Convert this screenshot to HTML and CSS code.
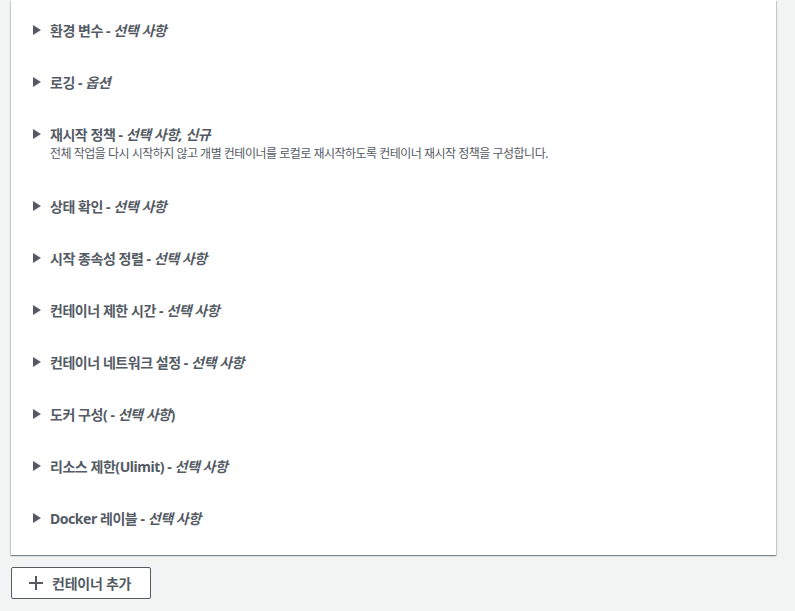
FILE: index.html
```html
<!DOCTYPE html>
<html lang="ko">
<head>
<meta charset="utf-8">
<link rel="stylesheet" href="styles.css">
</head>
<body>
<div class="page">
  <div class="panel">
    <div class="row"><div class="title"><span class="caret"></span><span>환경 변수 - <i>선택 사항</i></span></div></div>
    <div class="row"><div class="title"><span class="caret"></span><span>로깅 - <i>옵션</i></span></div></div>
    <div class="row"><div class="title"><span class="caret"></span><span>재시작 정책 - <i>선택 사항, 신규</i></span></div>
      <div class="desc">전체 작업을 다시 시작하지 않고 개별 컨테이너를 로컬로 재시작하도록 컨테이너 재시작 정책을 구성합니다.</div></div>
    <div class="row"><div class="title"><span class="caret"></span><span>상태 확인 - <i>선택 사항</i></span></div></div>
    <div class="row"><div class="title"><span class="caret"></span><span>시작 종속성 정렬 - <i>선택 사항</i></span></div></div>
    <div class="row"><div class="title"><span class="caret"></span><span>컨테이너 제한 시간 - <i>선택 사항</i></span></div></div>
    <div class="row"><div class="title"><span class="caret"></span><span>컨테이너 네트워크 설정 - <i>선택 사항</i></span></div></div>
    <div class="row"><div class="title"><span class="caret"></span><span>도커 구성( - <i>선택 사항</i>)</span></div></div>
    <div class="row"><div class="title"><span class="caret"></span><span>리소스 제한(Ulimit) - <i>선택 사항</i></span></div></div>
    <div class="row"><div class="title"><span class="caret"></span><span>Docker 레이블 - <i>선택 사항</i></span></div></div>
  </div>
  <button class="add-btn" type="button">
    <svg class="plus" width="16" height="16" viewBox="0 0 16 16"><path d="M8 1v14M1 8h14" stroke="#545b64" stroke-width="2" fill="none"/></svg>
    <span>컨테이너 추가</span>
  </button>
</div>
</body>
</html>
```
FILE: styles.css
```css
html, body {
  margin: 0;
  padding: 0;
  background: #f2f3f3;
}
body {
  font-family: "Noto Sans", "Noto Sans CJK KR", sans-serif;
  color: #545b64;
}
.page {
  padding-left: 11px;
  width: 765px;
}
.panel {
  background: #fff;
  box-shadow: 0 1px 1px 0 rgba(0,28,36,.3), 1px 1px 1px 0 rgba(0,28,36,.15), -1px 1px 1px 0 rgba(0,28,36,.15);
  padding: 19px 0 26px 22px;
  display: flex;
  flex-direction: column;
  gap: 30px;
}
.title {
  display: flex;
  align-items: center;
  height: 22px;
  font-size: 14px;
  font-weight: 700;
  letter-spacing: -0.45px;
  white-space: nowrap;
}
.title i {
  font-style: italic;
}
.caret {
  width: 0;
  height: 0;
  border-top: 5px solid transparent;
  border-bottom: 5px solid transparent;
  border-left: 8px solid #545b64;
  margin-right: 9px;
}
.desc {
  padding-left: 17px;
  font-size: 12px;
  line-height: 18px;
  letter-spacing: -0.5px;
  color: #545b64;
  margin-bottom: 2px;
}
.add-btn {
  margin-top: 12px;
  display: flex;
  align-items: center;
  gap: 8px;
  height: 32px;
  width: 140px;
  padding: 0 0 0 16px;
  background: #fff;
  border: 1px solid #545b64;
  border-radius: 2px;
  font-family: "Noto Sans", "Noto Sans CJK KR", sans-serif;
  font-size: 14px;
  font-weight: 700;
  letter-spacing: -0.25px;
  color: #545b64;
}
```
